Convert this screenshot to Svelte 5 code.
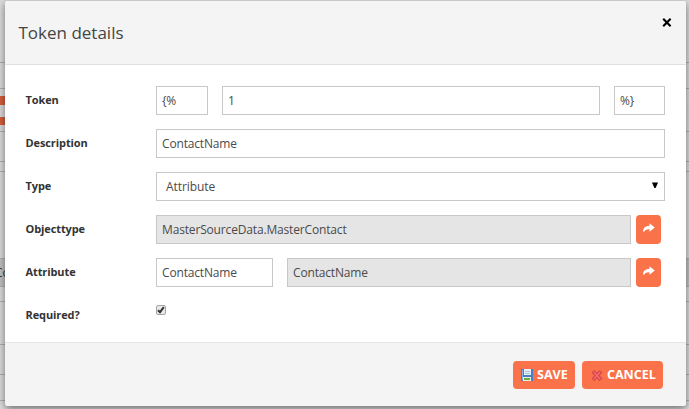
<script>
  const strips = [
    [62, '#dddddd'], [26, '#dddddd'], [8, '#dddddd'], [9, '#d65f3d'], [12, '#dcdada'],
    [8, '#d65f3d'], [6, '#dddddd'], [30, '#dddddd'], [10, '#dddddd'], [87, '#dddddd'],
    [28, '#c3c3c3'], [15, '#dddddd'], [43, '#dddddd'], [30, '#dddddd'], [26, '#dddddd'], [9, '#dddddd']
  ];
  const ruled = new Set([1, 2, 7, 8, 9, 10, 11, 12, 13, 14, 15]);
</script>

{#snippet share()}
  <button class="share" aria-label="Open">
    <svg width="12" height="11" viewBox="0 0 12 11"><path d="M6.5 0.3 L11.8 4.6 L6.5 8.8 V6.3 C4 6.2 2.2 6.8 1.2 8.8 H0.2 C-0.1 5.3 2.3 3 6.5 2.8 Z" fill="#fff" /></svg>
  </button>
{/snippet}

<div class="screen">
  <div class="page">
    {#each strips as [height, color], i}
      <div class="strip" class:ruled={ruled.has(i)} class:orange={i === 3 || i === 5} style="height:{height}px;--c:{color}">{#if i === 10}<span>Co</span>{/if}</div>
    {/each}
  </div>

  <div class="modal">
    <header>
      <h1>Token details</h1>
      <button class="close" aria-label="Close">
        <svg width="10" height="9" viewBox="0 0 10 9"><path d="M1.2 0.8 L8.6 8.2 M8.6 0.8 L1.2 8.2" stroke="#000" stroke-width="2.1" /></svg>
      </button>
    </header>

    <main>
      <div class="row">
        <span class="label">Token</span>
        <div class="fields wide"><div class="field w52">{'{%'}</div><div class="field grow">1</div><div class="field w51">{'%}'}</div></div>
      </div>
      <div class="row">
        <span class="label">Description</span>
        <div class="fields"><div class="field grow">ContactName</div></div>
      </div>
      <div class="row">
        <span class="label">Type</span>
        <div class="fields"><div class="field grow select">Attribute<svg width="6" height="7" viewBox="0 0 6 7"><path d="M0 0.5 H6 L3.6 6 H2.4 Z" fill="#000" /></svg></div></div>
      </div>
      <div class="row">
        <span class="label">Objecttype</span>
        <div class="fields"><div class="field w475 disabled">MasterSourceData.MasterContact</div>{@render share()}</div>
      </div>
      <div class="row">
        <span class="label">Attribute</span>
        <div class="fields"><div class="field w117">ContactName</div><div class="field w344 disabled">ContactName</div>{@render share()}</div>
      </div>
      <div class="row">
        <span class="label">Required?</span>
        <div class="fields"><div class="check"><svg width="8" height="8" viewBox="0 0 8 8"><path d="M1 4.3 L3 6.2 L6.8 1.2" fill="none" stroke="#333" stroke-width="2" /></svg></div></div>
      </div>
    </main>

    <footer>
      <button class="action save">
        <svg width="12" height="12" viewBox="0 0 12 12" shape-rendering="crispEdges">
          <rect width="12" height="12" fill="#4a7fc4" />
          <rect x="1" y="1" width="1" height="10" fill="#86b2e6" />
          <rect x="3" y="0" width="7" height="6" fill="#e9f0f8" />
          <rect x="4" y="2" width="5" height="1" fill="#a9c2df" />
          <rect x="4" y="4" width="5" height="1" fill="#a9c2df" />
          <rect x="2" y="8" width="8" height="4" fill="#e8efe8" />
          <rect x="3" y="9" width="6" height="2" fill="#6cac35" />
        </svg>
        <span>SAVE</span>
      </button>
      <button class="action cancel">
        <svg width="12" height="13" viewBox="0 0 12 13">
          <path d="M2 2.2 L10 10.8 M10 2.2 L2 10.8" stroke="#d03a42" stroke-width="3.6" />
          <path d="M2.5 2.7 L9.5 10.3 M9.5 2.7 L2.5 10.3" stroke="#f3686c" stroke-width="1.8" />
        </svg>
        <span>CANCEL</span>
      </button>
    </footer>
  </div>
</div>

<style>
  * { box-sizing: border-box; }
  .screen {
    position: relative;
    width: 689px;
    height: 409px;
    overflow: hidden;
    font-family: "Open Sans", "Noto Sans", sans-serif;
    font-size: 12px;
    color: #4a4a4a;
  }
  .page { height: 409px; overflow: hidden; background: #ddd; }
  .strip { background: var(--c); overflow: hidden; }
  .strip.orange { width: 20px; }
  .ruled { border-top: 1px solid #b2b2b2; }
  .strip span { display: block; margin: 5px 0 0 -5px; line-height: 18px; color: #333; }
  .modal {
    position: absolute;
    left: 5px;
    top: 0;
    width: 681px;
    height: 406px;
    display: flex;
    flex-direction: column;
    background: #fff;
    border-top: 1px solid #c8c8c8;
    border-radius: 3px;
    box-shadow: 0 3px 9px rgba(0, 0, 0, 0.5);
    overflow: hidden;
  }
  header {
    height: 64px;
    flex: none;
    display: flex;
    justify-content: space-between;
    align-items: flex-start;
    padding: 17px 14px 0 13.5px;
    background: #f4f4f4;
    border-bottom: 1px solid #e0e0e0;
  }
  h1 { margin: 0; font-size: 17px; font-weight: 400; line-height: 30px; color: #444; }
  button { border: 0; padding: 0; font-family: inherit; }
  .close { background: none; width: 10px; height: 9px; }
  svg { display: block; flex: none; }
  main { flex: 1; min-height: 0; padding: 21px 21px 0 20px; }
  .row { display: flex; height: 29px; margin-bottom: 14px; align-items: center; }
  .row:last-child { margin-bottom: 0; }
  .label { width: 131px; padding-left: 0.5px; font-size: 11px; font-weight: 700; letter-spacing: -0.1px; color: #333; line-height: 27px; margin-bottom: 2px; }
  .fields { display: flex; flex: 1; height: 29px; align-items: center; }
  .wide { gap: 14px; }
  .field {
    height: 29px;
    border: 1px solid #c8c8c8;
    background: #fff;
    padding-left: 5px;
    line-height: 27px;
    letter-spacing: -0.16px;
    white-space: nowrap;
  }
  .grow { flex: 1; }
  .w52 { width: 52px; }
  .w51 { width: 51px; }
  .w475 { width: 475px; }
  .w117 { width: 117px; margin-right: 14px; }
  .w344 { width: 344px; }
  .disabled { background: #e5e5e5; }
  .select { display: flex; align-items: center; justify-content: space-between; padding: 0 6px 0 9px; letter-spacing: -0.08px; }
  .select svg { margin-bottom: 2px; }
  .share {
    width: 25px;
    height: 29px;
    margin-left: 5px;
    border-radius: 4px;
    background: #f9724a;
    padding: 0 0 2px 7px;
  }
  .check {
    width: 10px;
    height: 10px;
    margin-bottom: 11px;
    border: 1px solid #a5a5a5;
    border-radius: 2px;
    background: #e9e9e9;
  }
  footer {
    height: 64px;
    flex: none;
    display: flex;
    justify-content: flex-end;
    gap: 7px;
    padding: 18px 23px 0 0;
    background: #f4f4f4;
    border-top: 1px solid #e5e5e5;
  }
  .action {
    display: flex;
    align-items: center;
    height: 28px;
    border-radius: 4px;
    background: #f9724a;
    color: #fff;
    font-size: 12.5px;
    font-weight: 700;
    line-height: 28px;
    white-space: nowrap;
  }
  .save { width: 62px; padding-left: 8px; gap: 4px; }
  .cancel { width: 81px; padding-left: 9px; gap: 4px; }
</style>
